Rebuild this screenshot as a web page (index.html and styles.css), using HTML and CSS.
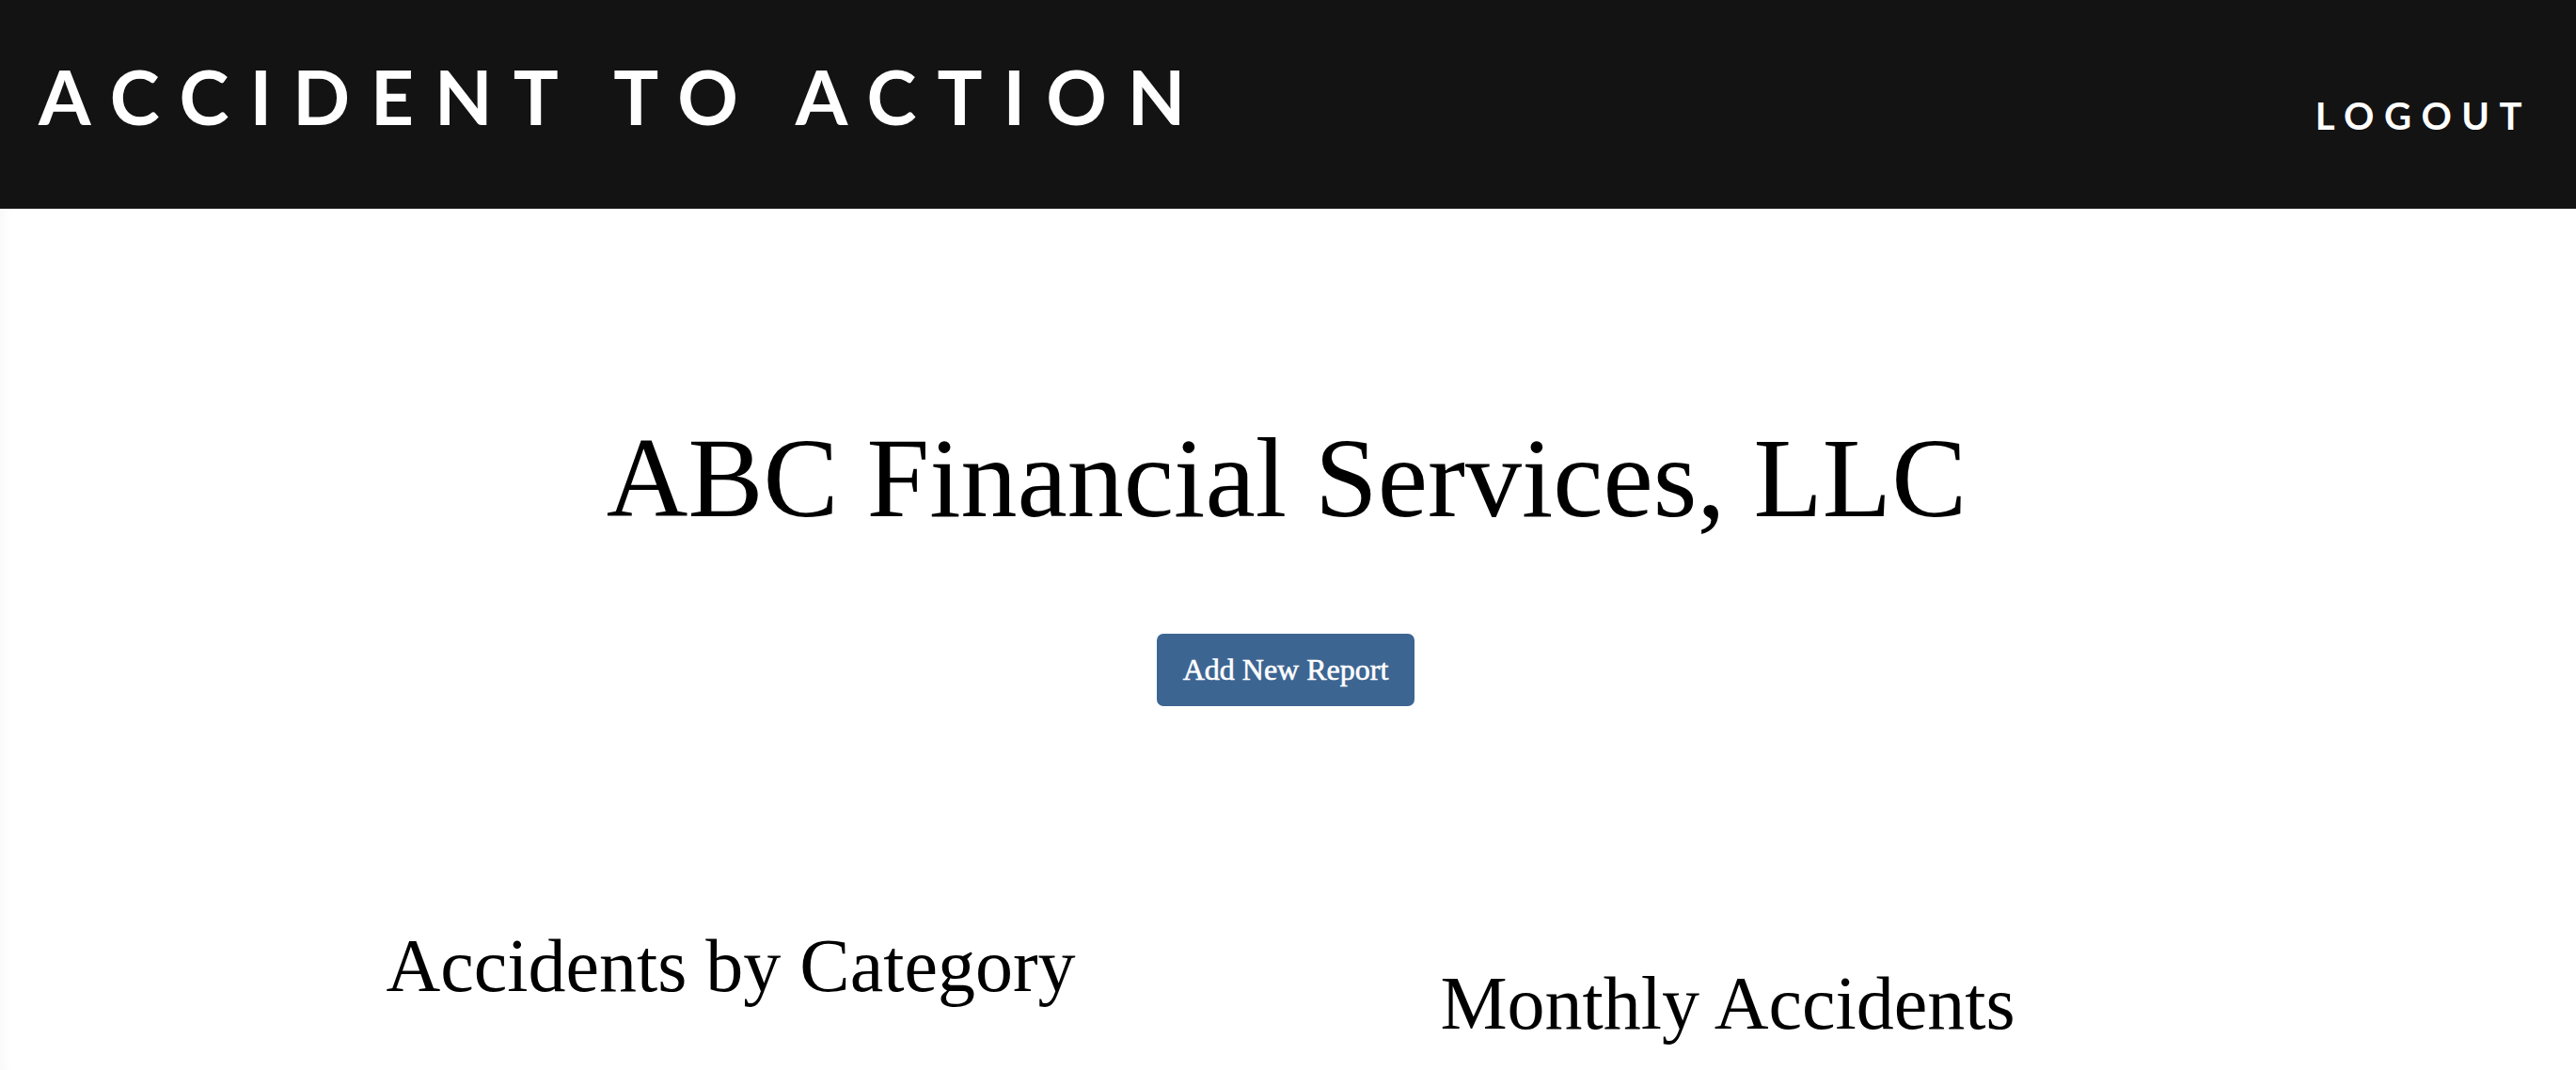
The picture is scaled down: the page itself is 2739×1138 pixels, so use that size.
FILE: index.html
```html
<!DOCTYPE html>
<html>
<head>
<meta charset="utf-8">
<title>Accident to Action</title>
<link rel="stylesheet" href="styles.css">
</head>
<body>
<header class="topbar">
  <div class="brand">ACCIDENT TO ACTION</div>
  <a class="logout" href="#">LOGOUT</a>
</header>
<main class="page">
  <h1 class="company">ABC Financial Services, LLC</h1>
  <div class="actions"><button class="btn-add">Add New Report</button></div>
  <section class="charts">
    <div class="chart chart-left"><h2 class="chart-title">Accidents by Category</h2></div>
    <div class="chart chart-right"><h2 class="chart-title">Monthly Accidents</h2></div>
  </section>
</main>
</body>
</html>
```
FILE: styles.css
```css
html, body {
  margin: 0;
  padding: 0;
  background: #ffffff;
}
body {
  font-family: "Liberation Serif", "Times New Roman", serif;
  overflow: hidden;
  height: 1138px;
}
.topbar {
  height: 222px;
  background: #131313;
  display: flex;
  justify-content: space-between;
  align-items: flex-start;
  box-sizing: border-box;
  padding: 0 47px 0 41px;
}
.brand {
  font-family: Lato, "Open Sans", sans-serif;
  font-weight: 700;
  font-size: 80px;
  letter-spacing: 22px;
  color: #ffffff;
  line-height: 1;
  margin-top: 62px;
}
.logout {
  font-family: Lato, "Open Sans", sans-serif;
  font-weight: 700;
  font-size: 40px;
  letter-spacing: 10.5px;
  color: #ffffff;
  text-decoration: none;
  line-height: 1;
  margin-top: 103px;
}
.page {
  box-shadow: inset 12px 0 14px -10px rgba(0,0,0,0.04);
  min-height: 916px;
}
.company {
  margin: 0;
  padding-top: 215px;
  padding-right: 3px;
  text-align: center;
  font-weight: 400;
  font-size: 120px;
  line-height: 1.2;
  color: #000;
}
.actions {
  display: flex;
  justify-content: center;
  margin-top: 93px;
  padding-right: 5px;
}
.btn-add {
  width: 274px;
  height: 77px;
  background: #3d6592;
  color: #fff;
  border: none;
  border-radius: 7px;
  font-family: "Liberation Serif", "Times New Roman", serif;
  font-weight: 400;
  font-size: 32px;
  -webkit-text-stroke: 0.6px #ffffff;
  padding: 0;
}
.charts {
  display: flex;
  gap: 60px;
  padding-left: 277px;
  margin-top: 228px;
}
.chart {
  width: 1000px;
  text-align: center;
}
.chart-title {
  margin: 0;
  font-weight: 400;
  font-size: 80px;
  line-height: 1.2;
}
.chart-right .chart-title {
  margin-top: 40px;
}
```
